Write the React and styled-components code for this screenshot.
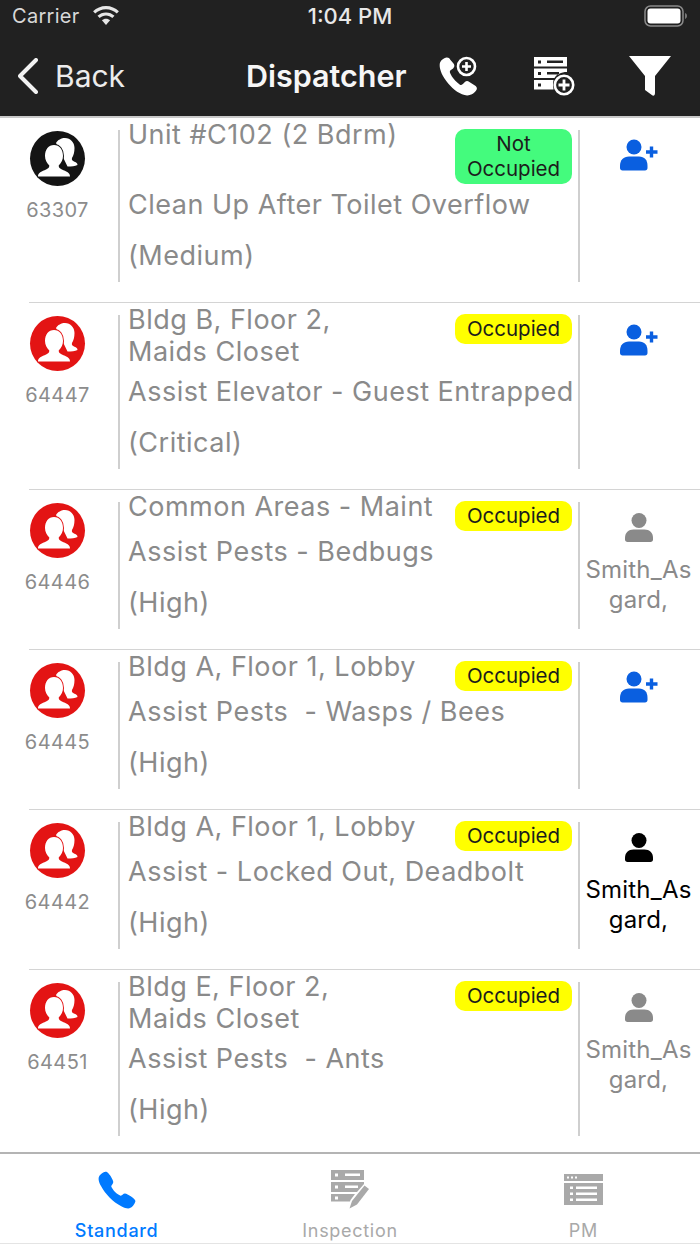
import React from 'react';
import styled, { createGlobalStyle } from 'styled-components';
import { IoCall } from 'react-icons/io5';

const GlobalStyle = createGlobalStyle`
  html, body { margin: 0; padding: 0; background: #fff; }
  body { font-family: Inter, "Liberation Sans", sans-serif; }
  * { box-sizing: border-box; }
`;

const Screen = styled.div`
  width: 700px;
  height: 1244px;
  display: flex;
  flex-direction: column;
  overflow: hidden;
  background: #fff;
`;

const Header = styled.header`
  height: 118px;
  flex: none;
  background: #212121;
  border-bottom: 2px solid #c9c9c9;
  color: #f2f2f2;
`;

const StatusBar = styled.div`
  height: 32px;
  padding: 0 12px;
  display: grid;
  grid-template-columns: 1fr auto 1fr;
  align-items: center;
  font-size: 20px;
  color: #d8d8d8;
`;

const StatusLeft = styled.div`
  display: flex;
  align-items: center;
  gap: 12px;
  letter-spacing: 0.3px;
`;

const Clock = styled.div`
  font-size: 22px;
  font-weight: 500;
  color: #e8e8e8;
`;

const StatusRight = styled.div`
  display: flex;
  justify-content: flex-end;
`;

const NavBar = styled.nav`
  height: 84px;
  display: flex;
  align-items: center;
  padding: 3px 29px 0 18px;
`;

const BackLink = styled.div`
  display: flex;
  align-items: center;
  gap: 17px;
  width: 228px;
  font-size: 30px;
  color: #ececec;
`;

const NavTitle = styled.div`
  font-size: 30.5px;
  font-weight: 600;
  width: 192px;
  color: #f6f6f6;
`;

const NavActions = styled.div`
  flex: 1;
  display: flex;
  justify-content: space-between;
  align-items: center;
`;

const List = styled.div`
  flex: 1;
  overflow: hidden;
`;

const RowBox = styled.div`
  display: grid;
  grid-template-columns: 118px 2px 1fr 2px 120px;
  position: relative;
  padding-bottom: 1px;
  &::after {
    content: '';
    position: absolute;
    left: 29px;
    right: 0;
    bottom: 0;
    height: 1px;
    background: #d4d4d4;
  }
`;

const LeftCell = styled.div`
  padding-top: 13px;
  display: flex;
  flex-direction: column;
  align-items: center;
  padding-right: 3px;
`;

const Avatar = styled.div`
  width: 55px;
  height: 55px;
  border-radius: 50%;
  overflow: hidden;
  background: ${p => p.$color};
`;

const TicketNo = styled.div`
  margin-top: 12px;
  font-size: 20px;
  line-height: 24px;
  letter-spacing: 0.4px;
  color: #8c8c8c;
`;

const Divider = styled.div`
  margin: 12px 0 20px;
  background: #cfcfcf;
`;

const Main = styled.div`
  padding: 0 0 25px 8px;
  min-width: 0;
  color: #8a8a8a;
  font-size: 27px;
  letter-spacing: 0.5px;
`;

const TopBlock = styled.div`
  display: flex;
  justify-content: space-between;
  align-items: flex-start;
`;

const Location = styled.div`
  line-height: 32px;
  padding: 1px 0 3px;
  white-space: pre-line;
`;

const Badge = styled.div`
  flex: none;
  margin: 11px 6px 0 0;
  width: 117px;
  padding: 2px 0 3px;
  border-radius: 10px;
  text-align: center;
  font-size: 20.5px;
  line-height: 25px;
  letter-spacing: 0;
  color: #1c1c1c;
  background: ${p => p.$color};
`;

const Line = styled.div`
  line-height: 42px;
  white-space: pre;
`;

const Priority = styled(Line)`
  margin-top: 9px;
`;

const RightCell = styled.div`
  padding: ${p => (p.$assigned ? 23 : 21)}px 3px 0 0;
  display: flex;
  flex-direction: column;
  align-items: center;
`;

const Assignee = styled.div`
  margin-top: 12px;
  width: 112px;
  font-size: 24px;
  line-height: 30px;
  letter-spacing: 0.2px;
  text-align: center;
  word-break: break-all;
  color: ${p => p.$color};
`;

const TabBar = styled.footer`
  flex: none;
  height: 92px;
  background: #fff;
  border-top: 2px solid #b4b4b4;
  border-bottom: 1px solid #e4e4e4;
  display: grid;
  grid-template-columns: repeat(3, 1fr);
`;

const Tab = styled.div`
  display: flex;
  flex-direction: column;
  align-items: center;
  color: ${p => (p.$active ? '#007aff' : '#a9a9a9')};
`;

const TabIcon = styled.div`
  height: 66px;
  display: flex;
  align-items: center;
  padding: 14px 0 9px;
`;

const TabLabel = styled.div`
  font-size: 18px;
  line-height: 22px;
  letter-spacing: 0.7px;
  font-weight: ${p => (p.$active ? 500 : 400)};
`;

const Wifi = () => (
  <svg width="28" height="20" viewBox="0 0 28 20" fill="#e6e6e6">
    <path d="M14 3.2c4.2 0 8 1.6 10.8 4.3l2.1-2.3C23.500 2 19 0 14 0S4.500 2 1.100 5.200l2.100 2.300C6 4.800 9.800 3.200 14 3.200z" />
    <path d="M14 9.600c2.400 0 4.600.9 6.300 2.400l2.200-2.300C20.200 7.600 17.200 6.400 14 6.400s-6.200 1.200-8.500 3.300l2.200 2.300c1.700-1.500 3.900-2.400 6.300-2.400z" />
    <path d="M14 12.800c-1.600 0-3 .6-4.100 1.500L14 19l4.100-4.700c-1.100-.9-2.500-1.500-4.100-1.500z" />
  </svg>
);

const Battery = () => (
  <svg width="44" height="22" viewBox="0 0 44 22">
    <rect x="1" y="1" width="38" height="20" rx="5.500" fill="none" stroke="#8a8a8a" strokeWidth="1.500" />
    <rect x="3.500" y="3.500" width="33" height="15" rx="3" fill="#fff" />
    <path d="M41 8v6c1.300-.4 2-1.600 2-3s-.7-2.600-2-3z" fill="#777" />
  </svg>
);

const Chevron = () => (
  <svg width="20" height="36" viewBox="0 0 20 36" fill="none" stroke="#f2f2f2" strokeWidth="4" strokeLinecap="round" strokeLinejoin="round">
    <path d="M18 2 2 18l16 16" />
  </svg>
);

const PhonePlus = () => (
  <svg width="40" height="40" viewBox="0 0 40 40">
    <path fill="#fff" d="M8.500 1.500c-2 .3-5 2.200-6.200 4.500C.7 9.200 2.200 16 6.500 22.500c4.500 7 11 13 17.500 15.800 4 1.700 8 1.500 11.500-1 2-1.500 3.500-3.300 3.400-5-.1-1.200-.9-2-2-2.800l-5.500-3.600c-1.800-1.100-3.200-1.100-4.500.2l-2 2c-1 1-2 1.100-3.300.3-3.800-2.500-7.800-7-9.500-11.300-.5-1.300-.2-2.200.8-3l2.200-1.700c1.400-1.200 1.600-2.600.8-4.300L12.300 3.700c-.8-1.500-2-2.400-3.800-2.200z" />
    <circle cx="28.500" cy="10.500" r="8.500" fill="none" stroke="#fff" strokeWidth="2.600" />
    <path d="M28.500 6v9M24 10.500h9" stroke="#fff" strokeWidth="2.600" />
  </svg>
);

const ServerPlus = () => (
  <svg width="42" height="40" viewBox="0 0 42 40">
    <path fill="#fff" fillRule="evenodd" d="M1 1h33v9.500H1zM5 4.500v3h3v-3zM14 4.500v2.500h16v-2.500z" />
    <path fill="#fff" fillRule="evenodd" d="M1 12.500h33v3.500c-6 0-10.500 2.500-12.500 6H1zM5 16v3h3v-3zM14 16v2.500h12V16z" />
    <path fill="#fff" fillRule="evenodd" d="M1 24h19.500c-.5 2-.5 6 0 9.500H1zM5 27.500v3h3v-3z" />
    <circle cx="31" cy="29" r="9.200" fill="none" stroke="#fff" strokeWidth="2.600" />
    <path d="M31 23.500v11M25.500 29h11" stroke="#fff" strokeWidth="2.800" />
  </svg>
);

const FunnelIcon = () => (
  <svg width="42" height="42" viewBox="0 0 42 42">
    <path fill="#fff" d="M0 1h42L26 21v17c0 2-1 3-2.500 2.500L16 35V21z" />
  </svg>
);

// front bust drawn over the rear one, the stroke in the disc colour keeps them apart
const Crowd = ({ bg }) => (
  <svg width="55" height="55" viewBox="0 0 55 55" fill="#fff">
    <path d="M26 12c1.500-3 5.500-5 9-5 5.500 0 9.500 4.500 9.500 10 0 4.500-1 7.500-2.500 10-.6 1.800.5 3 2.500 3.700 1.800.6 3 1.500 3 3.300-2.500 1.200-6 1.500-10 1.500z" />
    <path stroke={bg} strokeWidth="2" paintOrder="stroke" d="M8 45.500c0-3.500 2.500-4.800 6.500-6.300 3-1.100 5-2.200 4.800-4.700-2.500-2.500-4.300-5.500-4.300-9.500 0-6.500 3.500-11 9-11s9 4.500 9 11c0 4-1.800 7-4.300 9.500-.2 2.500 1.800 3.600 4.800 4.700 4 1.500 6.500 2.800 6.500 6.300z" />
  </svg>
);

const PersonAdd = () => (
  <svg width="38" height="32" viewBox="0 0 38 32" fill="#0a5fe0">
    <circle cx="14" cy="8" r="7.500" />
    <path d="M0 27c0-6 3.500-9.500 9-9.500h10c5.500 0 8.500 3.500 8.500 9.500v2c0 1.500-1 2.500-2.500 2.500H2.500C1 31.500 0 30.500 0 29z" />
    <path d="M31.500 7.500v11M26 13h11.500" stroke="#0a5fe0" strokeWidth="3.400" fill="none" />
  </svg>
);

const Person = ({ color }) => (
  <svg width="28" height="30" viewBox="0 0 28 30" fill={color}>
    <circle cx="14" cy="7.500" r="7.500" />
    <path d="M0 25c0-5.500 3.500-8.500 8.500-8.500h11C24.500 16.500 28 19.500 28 25v1.500c0 1.500-1 2.500-2.500 2.500h-23C1 29 0 28 0 26.500z" />
  </svg>
);

const ServerEdit = () => (
  <svg width="40" height="39" viewBox="0 0 40 39" fill="#a9a9a9">
    <path fillRule="evenodd" d="M1 0h33v10H1zM5 3.500v3h3v-3zM15 3.500v2.500h15V3.500z" />
    <path fillRule="evenodd" d="M1 12h33v2L27 22H1zM5 15.500v3h3v-3zM15 15.500v2.500h13v-2.500z" />
    <path fillRule="evenodd" d="M1 24h24l-4.500 6-.5 1.500H1zM5 26.500v3h3v-3z" />
    <path d="M34.500 15.500 39 19 27 34.500 19.500 38.500 22 31z" />
  </svg>
);

const PmList = () => (
  <svg width="39" height="31" viewBox="0 0 39 31" fill="#a9a9a9">
    <path fillRule="evenodd" d="M0 0h39v7H0zM3 2.500v2h2v-2zM7 2.500v2h2v-2zM11 2.500v2h2v-2z" />
    <path fillRule="evenodd" d="M0 9h39v22H0zM6 12.500v2.500h3v-2.500zM12 12.500v2.500h21v-2.500zM6 18.500V21h3v-2.500zM12 18.500V21h21v-2.500zM6 24.500V27h3v-2.500zM12 24.500V27h21v-2.500z" />
  </svg>
);

const OCCUPIED = '#ffff00';
const VACANT = '#44fb7d';

const tickets = [
  { id: '63307', disc: '#141414', location: 'Unit #C102 (2 Bdrm)', badge: 'Not Occupied', badgeColor: VACANT, work: 'Clean Up After Toilet Overflow', priority: '(Medium)' },
  { id: '64447', disc: '#e31414', location: 'Bldg B, Floor 2,\nMaids Closet', badge: 'Occupied', badgeColor: OCCUPIED, work: 'Assist Elevator - Guest Entrapped', priority: '(Critical)' },
  { id: '64446', disc: '#e31414', location: 'Common Areas - Maint', badge: 'Occupied', badgeColor: OCCUPIED, work: 'Assist Pests - Bedbugs', priority: '(High)', assignee: '#8a8a8a' },
  { id: '64445', disc: '#e31414', location: 'Bldg A, Floor 1, Lobby', badge: 'Occupied', badgeColor: OCCUPIED, work: 'Assist Pests  - Wasps / Bees', priority: '(High)' },
  { id: '64442', disc: '#e31414', location: 'Bldg A, Floor 1, Lobby', badge: 'Occupied', badgeColor: OCCUPIED, work: 'Assist - Locked Out, Deadbolt', priority: '(High)', assignee: '#000' },
  { id: '64451', disc: '#e31414', location: 'Bldg E, Floor 2,\nMaids Closet', badge: 'Occupied', badgeColor: OCCUPIED, work: 'Assist Pests  - Ants', priority: '(High)', assignee: '#8a8a8a' },
];

const TicketRow = ({ ticket }) => (
  <RowBox>
    <LeftCell>
      <Avatar $color={ticket.disc}><Crowd bg={ticket.disc} /></Avatar>
      <TicketNo>{ticket.id}</TicketNo>
    </LeftCell>
    <Divider />
    <Main>
      <TopBlock>
        <Location>{ticket.location}</Location>
        <Badge $color={ticket.badgeColor}>{ticket.badge}</Badge>
      </TopBlock>
      <Line>{ticket.work}</Line>
      <Priority>{ticket.priority}</Priority>
    </Main>
    <Divider />
    <RightCell $assigned={!!ticket.assignee}>
      {ticket.assignee ? (
        <>
          <Person color={ticket.assignee} />
          <Assignee $color={ticket.assignee}>Smith_Asgard,</Assignee>
        </>
      ) : (
        <PersonAdd />
      )}
    </RightCell>
  </RowBox>
);

export default function App() {
  return (
    <Screen>
      <GlobalStyle />
      <Header>
        <StatusBar>
          <StatusLeft>Carrier <Wifi /></StatusLeft>
          <Clock>1:04 PM</Clock>
          <StatusRight><Battery /></StatusRight>
        </StatusBar>
        <NavBar>
          <BackLink><Chevron /> Back</BackLink>
          <NavTitle>Dispatcher</NavTitle>
          <NavActions>
            <PhonePlus />
            <ServerPlus />
            <FunnelIcon />
          </NavActions>
        </NavBar>
      </Header>
      <List>
        {tickets.map(t => <TicketRow key={t.id} ticket={t} />)}
      </List>
      <TabBar>
        <Tab $active>
          <TabIcon><IoCall size={42} /></TabIcon>
          <TabLabel $active>Standard</TabLabel>
        </Tab>
        <Tab>
          <TabIcon><ServerEdit /></TabIcon>
          <TabLabel>Inspection</TabLabel>
        </Tab>
        <Tab>
          <TabIcon><PmList /></TabIcon>
          <TabLabel>PM</TabLabel>
        </Tab>
      </TabBar>
    </Screen>
  );
}
